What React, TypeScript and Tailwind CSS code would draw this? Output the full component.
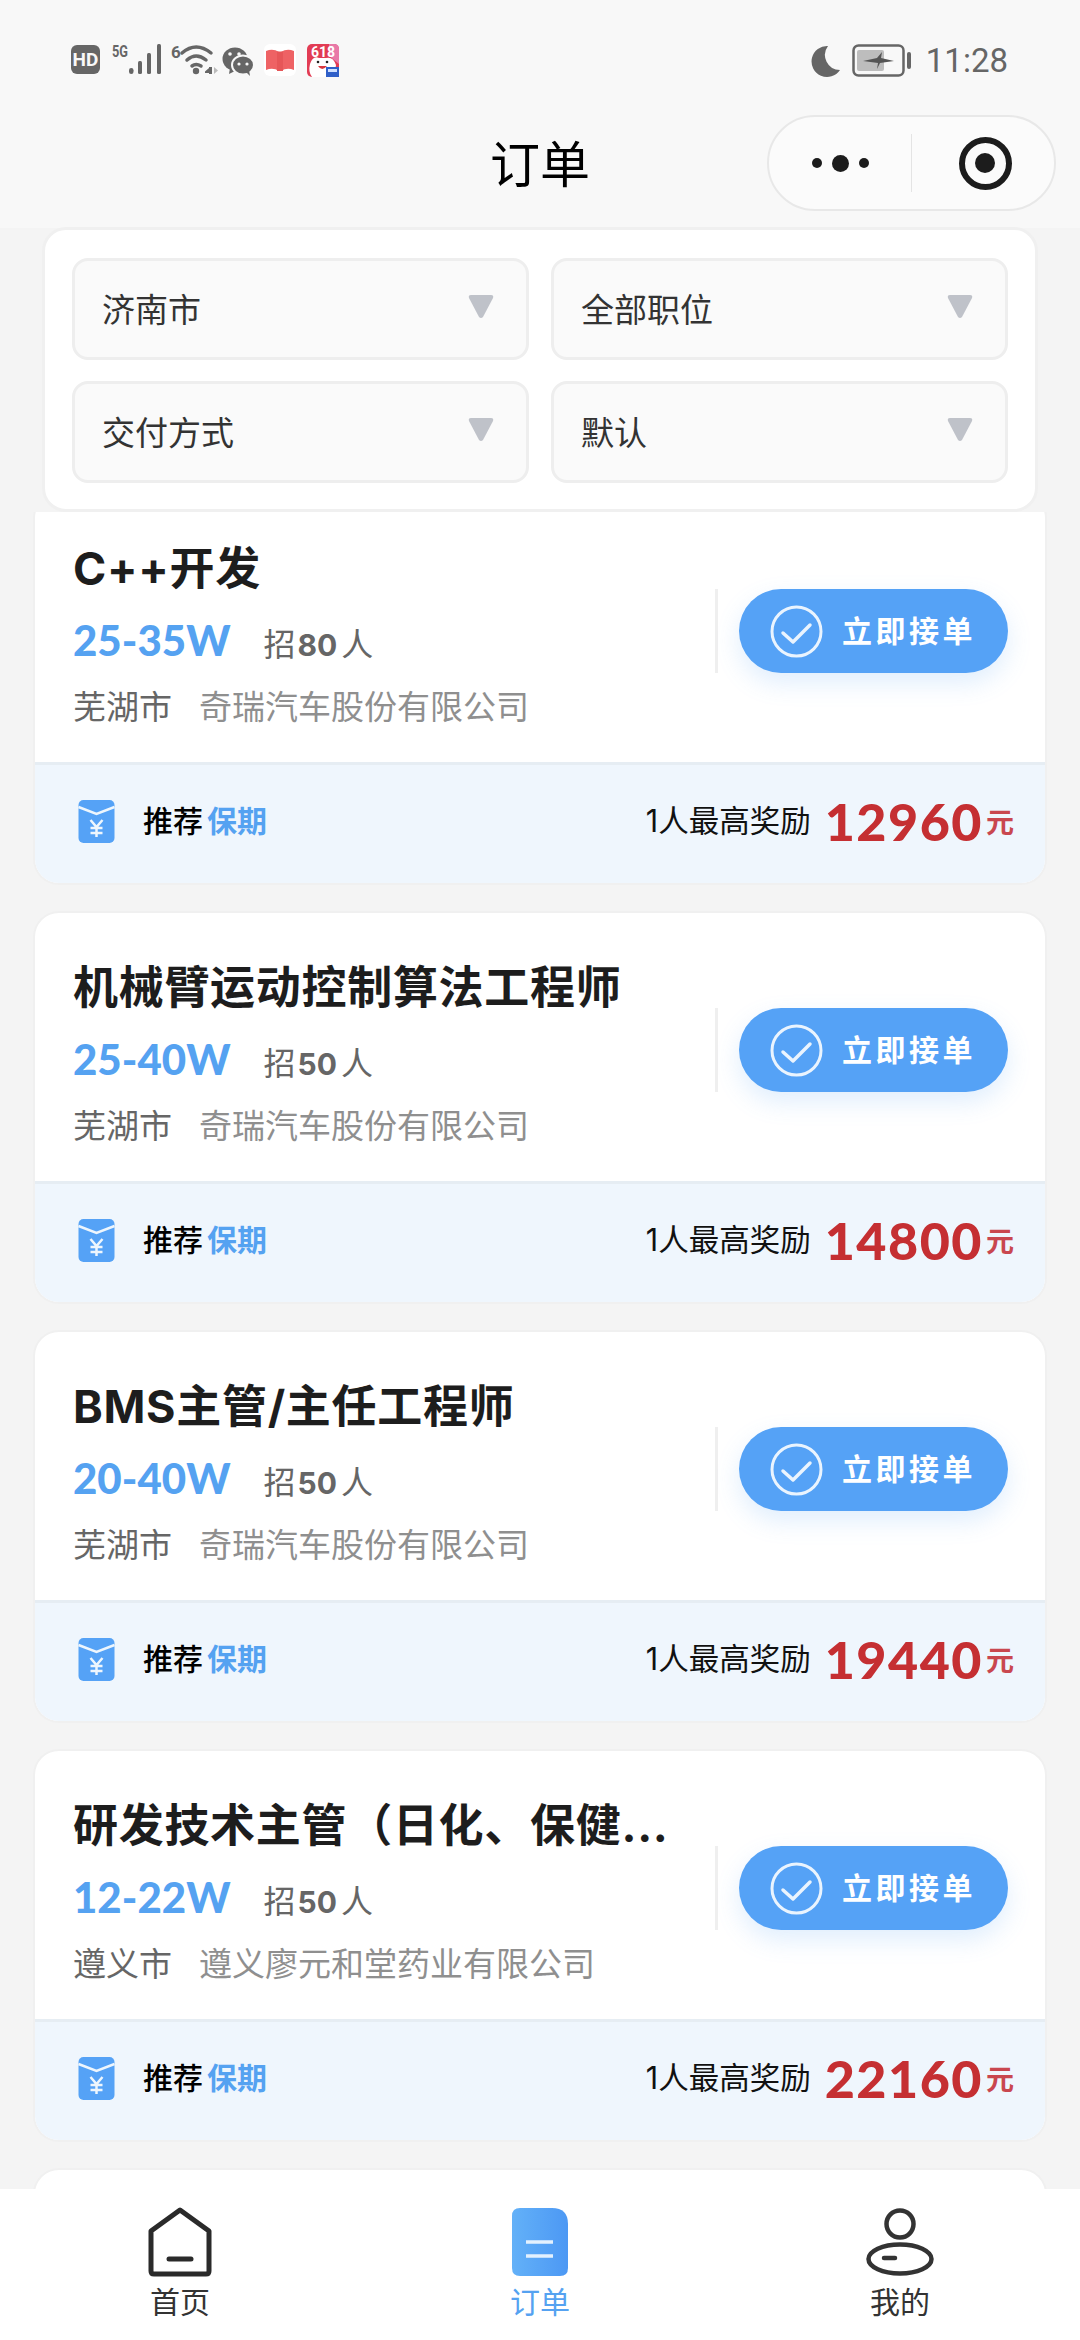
import React from 'react';

const FONT = "font-['Inter','Noto_Sans_CJK_SC',sans-serif]";

const orders = [
  { title: 'C++开发', salary: '25-35W', count: 80, city: '芜湖市', company: '奇瑞汽车股份有限公司', reward: 12960 },
  { title: '机械臂运动控制算法工程师', salary: '25-40W', count: 50, city: '芜湖市', company: '奇瑞汽车股份有限公司', reward: 14800 },
  { title: 'BMS主管/主任工程师', salary: '20-40W', count: 50, city: '芜湖市', company: '奇瑞汽车股份有限公司', reward: 19440 },
  { title: '研发技术主管（日化、保健...', salary: '12-22W', count: 50, city: '遵义市', company: '遵义廖元和堂药业有限公司', reward: 22160 },
];

const StatusLeft = () => (
  <svg width="268" height="41" viewBox="0 -8 268 41" className="ml-[71px]">
    {/* HD */}
    <rect x="0" y="1" width="29" height="29" rx="6" fill="#666" />
    <text x="14.5" y="22" textAnchor="middle" fontSize="19" fontWeight="700" fill="#f8f8f8" fontFamily="Roboto">HD</text>
    {/* 5G + bars */}
    <text x="41" y="13" fontSize="17" fontWeight="700" fill="#666" fontFamily="Roboto" textLength="16" lengthAdjust="spacingAndGlyphs">5G</text>
    <g fill="#666">
      <rect x="58" y="24" width="4.5" height="6" rx="2.2" />
      <rect x="67" y="17" width="4" height="13" rx="1.5" />
      <rect x="76" y="9" width="4" height="21" rx="1.5" />
      <rect x="86" y="0" width="4" height="30" rx="1.5" />
    </g>
    {/* wifi */}
    <text x="100" y="14" fontSize="17" fontWeight="700" fill="#666" fontFamily="Roboto">6</text>
    <g fill="none" stroke="#666" strokeWidth="3.5" strokeLinecap="round">
      <path d="M111 9 Q125 -3 140 9" />
      <path d="M116 16 Q125 8 135 16" />
      <path d="M121 22 Q125 19 130 22" />
    </g>
    <circle cx="125" cy="27" r="3.2" fill="#666" />
    <path d="M138 30 V24 L134 27.5 V29 H138 Z M138 23 H141 V30 H138 Z" fill="#666" />
    <path d="M143 23 V30 L147 26.5 Z" fill="#bbb" />
    {/* wechat */}
    <g fill="#666">
      <ellipse cx="164" cy="15" rx="12.5" ry="11.5" />
      <path d="M159 24 L158 30 L166 26 Z" />
      <ellipse cx="172" cy="21" rx="11" ry="9.5" stroke="#f8f8f8" strokeWidth="2" />
      <path d="M175 28 L179 32 L178 26 Z" />
    </g>
    <g fill="#f8f8f8">
      <circle cx="159" cy="10" r="1.8" />
      <circle cx="168" cy="10" r="1.8" />
    </g>
    <circle cx="168" cy="20" r="1.6" fill="#f8f8f8" />
    <circle cx="176" cy="20" r="1.6" fill="#f8f8f8" />
    {/* book */}
    <rect x="193" y="0" width="32" height="32" rx="6" fill="#fff" />
    <path d="M195 7 Q202 4 208 8 L208 27 Q202 23 195 26 Z" fill="#ee6264" />
    <path d="M223 7 Q216 4 210 8 L210 27 Q216 23 223 26 Z" fill="#ee6264" />
    <path d="M206 7.5 L212 7.5 L212 27 L206 27 Z" fill="#e65658" />
    {/* 618 app */}
    <g transform="translate(236 0)">
      <rect width="32" height="33" rx="5" fill="#e23c54" />
      <path d="M22 0 H27 Q32 0 32 5 V20 L22 12 Z" fill="#e879a8" />
      <path d="M3 20 Q6 11 12 14 H19 Q26 12 29 21 L27 33 H5 Q1 28 3 20 Z" fill="#fff" />
      <text x="16" y="13" textAnchor="middle" fontSize="14" fontWeight="700" fill="#fff" fontFamily="Roboto">618</text>
      <circle cx="11" cy="18" r="1.3" fill="#222" />
      <circle cx="20" cy="18" r="1.3" fill="#222" />
      <path d="M11 22 Q15 28 20 22 Z" fill="#d9363e" />
      <rect x="19" y="23" width="13" height="10" fill="#2f5fc8" />
      <rect x="21" y="25" width="9" height="3" fill="#cfe0ff" />
    </g>
  </svg>
);

const StatusRight = () => (
  <div className="flex items-center mr-[72px] mt-[8px]">
    <svg width="29" height="32" viewBox="0 0 29 32">
      <path d="M17 1 A15.5 15.5 0 1 0 29 25 A15 15 0 0 1 17 1 Z" fill="#666" />
    </svg>
    <svg width="60" height="33" viewBox="0 0 60 33" className="ml-[12px]">
      <rect x="1.5" y="1.5" width="50" height="30" rx="5" fill="none" stroke="#666" strokeWidth="2.5" />
      <rect x="5" y="6" width="27" height="21" rx="2" fill="#bdbdbd" />
      <path d="M11 17 L25 14 L30 8 L29 14 L42 17 L28 19 L25 25 L26 19 Z" fill="#555" />
      <rect x="55" y="8" width="4" height="17" rx="2" fill="#666" />
    </svg>
    <span className="text-[33px] leading-none text-[#666] font-['Roboto',sans-serif] ml-[14px]">11:28</span>
  </div>
);

const Capsule = () => (
  <div className="absolute right-[24px] top-[115px] w-[289px] h-[96px] rounded-full border-2 border-[#e8e8e8] bg-[#fbfbfb] flex items-center">
    <div className="w-[142px] flex items-center justify-center gap-[10px]">
      <span className="w-[10px] h-[10px] rounded-full bg-[#1c1c1c]" />
      <span className="w-[17px] h-[17px] rounded-full bg-[#1c1c1c]" />
      <span className="w-[10px] h-[10px] rounded-full bg-[#1c1c1c]" />
    </div>
    <div className="w-[1px] h-[58px] bg-[#e4e4e4]" />
    <div className="flex-1 flex items-center justify-center pl-[4px]">
      <div className="w-[53px] h-[53px] rounded-full border-[6px] border-[#1c1c1c] flex items-center justify-center">
        <span className="w-[20px] h-[20px] rounded-full bg-[#1c1c1c]" />
      </div>
    </div>
  </div>
);

const Select = ({ label }: { label: string }) => (
  <div className="h-[102px] rounded-[16px] border-[3px] border-[#eeeeee] bg-[#fafafa] flex items-center justify-between pl-[27px] pr-[31px]">
    <span className="text-[33px] leading-none text-[#333] mt-[3px]">{label}</span>
    <svg width="28" height="24" viewBox="0 0 26 24" className="mt-[-4px]">
      <path d="M3 0 H23 Q26 0 25 3 L15 22 Q13 24 11 22 L1 3 Q0 0 3 0 Z" fill="#bfc2c9" />
    </svg>
  </div>
);

const RedPacket = () => (
  <svg width="37" height="43" viewBox="0 0 36 43">
    <rect width="36" height="43" rx="5" fill="#55a2f6" />
    <path d="M0 7 L18 14 L36 7" fill="none" stroke="#eef6fd" strokeWidth="2.5" />
    <path d="M12 20 L18 27 L24 20 M18 27 V37 M12 28 H24 M12 33 H24" fill="none" stroke="#eef6fd" strokeWidth="2.5" />
  </svg>
);

const OrderCard = ({ order }: { order: (typeof orders)[number] }) => (
  <div className="h-[389px] rounded-[24px] bg-white shadow-[0_0_0_2px_#f0f0f0] overflow-hidden flex flex-col">
    <div className="h-[268px] flex items-start pl-[38px] pr-[37px]">
      <div className="flex-1 min-w-0 pt-[45px]">
        <div className="text-[45px] leading-[60px] font-bold text-[#1d1d1d] tracking-[0.7px] whitespace-nowrap">{order.title}</div>
        <div className="flex items-baseline mt-[13px] h-[56px]">
          <span className="text-[42px] leading-[56px] font-black text-[#55a2f1] font-['Lato','Noto_Sans_CJK_SC',sans-serif]">{order.salary}</span>
          <span className="text-[32px] text-[#666] ml-[33px]">招</span>
          <span className="text-[30px] font-bold text-[#666] ml-[2px]">{order.count}</span>
          <span className="text-[32px] text-[#666] ml-[4px]">人</span>
        </div>
        <div className="flex items-center mt-[14px] text-[33px] leading-[50px]">
          <span className="text-[#666] w-[126px]">{order.city}</span>
          <span className="text-[#8f8f8f]">{order.company}</span>
        </div>
      </div>
      <div className="w-[3px] h-[84px] bg-[#efefef] mr-[21px] mt-[95px]" />
      <button className="w-[269px] h-[84px] mt-[95px] rounded-full bg-[#55a2f6] shadow-[0_10px_24px_rgba(85,162,246,0.18)] flex items-center pl-[31px] text-white">
        <svg width="53" height="53" viewBox="0 0 53 53">
          <circle cx="26.5" cy="26.5" r="24.5" fill="none" stroke="#eaf4fe" strokeWidth="3" />
          <path d="M13 28 L23 37 L40 20" fill="none" stroke="#eaf4fe" strokeWidth="3.5" strokeLinecap="round" strokeLinejoin="round" />
        </svg>
        <span className="text-[30px] leading-none font-bold tracking-[3.5px] ml-[19px]">立即接单</span>
      </button>
    </div>
    <div className="flex-1 bg-[#eff6fd] border-t-[3px] border-[#e6edf3] flex items-center pl-[43px] pr-[31px] pb-[6px]">
      <RedPacket />
      <span className="text-[30px] font-medium text-black ml-[28px]">推荐</span>
      <span className="text-[30px] font-bold text-[#55a2f1] ml-[4px]">保期</span>
      <span className="text-[30.5px] text-[#111] ml-auto">1人最高奖励</span>
      <span className="text-[52px] leading-none font-black text-[#c52f32] ml-[14px] tracking-[1.5px] font-['Lato',sans-serif]">{order.reward}</span>
      <span className="text-[28px] font-bold text-[#c9474f] ml-[3px] mt-[4px]">元</span>
    </div>
  </div>
);

const TabItem = ({ label, active, children }: { label: string; active?: boolean; children: React.ReactNode }) => (
  <div className="flex-1 flex flex-col items-center pt-[18px]">
    <div className="h-[70px] flex items-center justify-center">{children}</div>
    <span className={`text-[30px] leading-[44px] mt-[3px] ${active ? 'text-[#55a2f1]' : 'text-[#333]'}`}>{label}</span>
  </div>
);

export default function App() {
  return (
    <div className={`relative w-[1080px] h-[2340px] overflow-hidden bg-[#f4f4f4] flex flex-col ${FONT}`}>
      <div className="h-[228px] bg-[#f8f8f8] shrink-0 relative">
        <div className="flex items-start justify-between pt-[36px]">
          <StatusLeft />
          <StatusRight />
        </div>
        <div className="absolute left-0 right-0 top-[133px] text-center text-[50px] leading-[64px] text-black">订单</div>
        <Capsule />
      </div>

      <div className="relative mx-[42px] shrink-0 rounded-[24px] bg-white border-[3px] border-[#f0f0f0] px-[27px] pt-[28px] grid grid-cols-2 gap-x-[22px] gap-y-[21px] content-start h-[285px] mt-[-1px]">
        <Select label="济南市" />
        <Select label="全部职位" />
        <Select label="交付方式" />
        <Select label="默认" />
      </div>

      {/* list is scrolled a little, its first card slides under the filter */}
      <div className="flex-1 min-h-0 overflow-hidden">
        <div className="flex flex-col gap-[30px] px-[35px] mt-[-18px]">
          {orders.map((o) => (
            <OrderCard key={o.title} order={o} />
          ))}
          <div className="h-[389px] rounded-[24px] bg-white shadow-[0_0_0_2px_#f0f0f0]" />
        </div>
      </div>

      <div className="relative h-[151px] bg-white flex shrink-0">
        <TabItem label="首页">
          <svg width="66" height="70" viewBox="0 0 66 70">
            <path d="M4 24 L33 3 L62 24 V64 Q62 67 59 67 H7 Q4 67 4 64 Z" fill="none" stroke="#2a2a2a" strokeWidth="5" strokeLinejoin="round" />
            <path d="M22 52 H44" stroke="#2a2a2a" strokeWidth="5" strokeLinecap="round" />
          </svg>
        </TabItem>
        <TabItem label="订单" active>
          <svg width="56" height="68" viewBox="0 0 56 68">
            <defs>
              <linearGradient id="orderTab" x1="0" y1="0" x2="1" y2="0">
                <stop offset="0" stopColor="#63b1f8" />
                <stop offset="1" stopColor="#4c98f4" />
              </linearGradient>
            </defs>
            <path d="M8 0 H40 Q56 0 56 16 V60 Q56 68 48 68 H8 Q0 68 0 60 V8 Q0 0 8 0 Z" fill="url(#orderTab)" />
            <path d="M14 34 H41 M14 48 H41" stroke="#e3f1fe" strokeWidth="3.5" />
          </svg>
        </TabItem>
        <TabItem label="我的">
          <svg width="70" height="68" viewBox="0 0 70 68">
            <circle cx="35" cy="16" r="13.5" fill="none" stroke="#333" strokeWidth="4.5" />
            <ellipse cx="35" cy="51" rx="31.5" ry="14.5" fill="none" stroke="#333" strokeWidth="4.5" />
            <path d="M19 50 H30" stroke="#333" strokeWidth="4.5" strokeLinecap="round" />
          </svg>
        </TabItem>
      </div>
    </div>
  );
}
